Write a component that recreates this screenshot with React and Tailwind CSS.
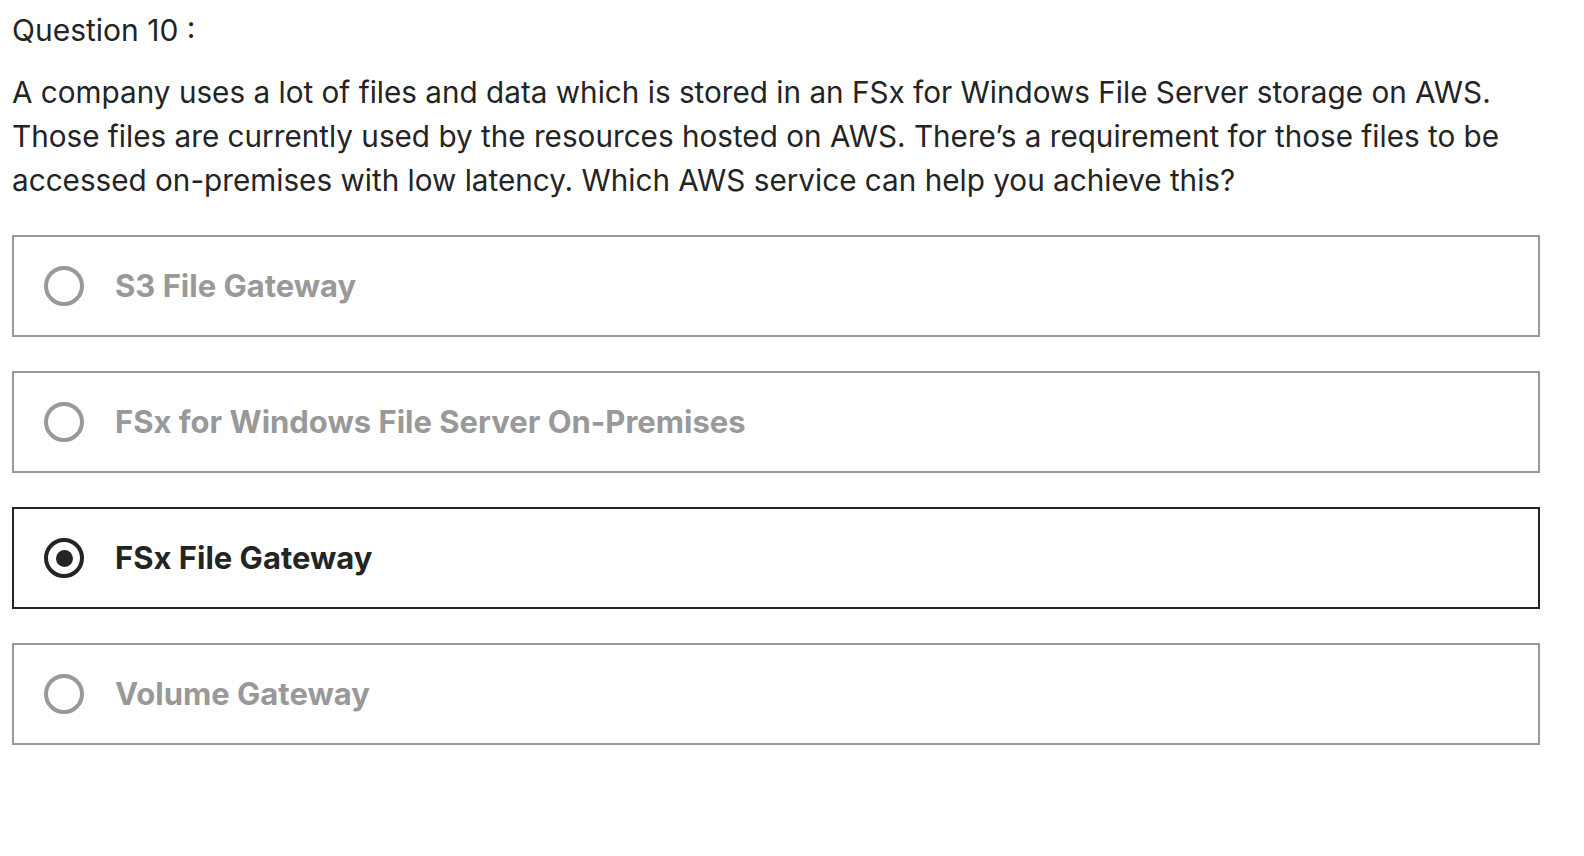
const options = [
  { label: 'S3 File Gateway', selected: false },
  { label: 'FSx for Windows File Server On-Premises', selected: false },
  { label: 'FSx File Gateway', selected: true },
  { label: 'Volume Gateway', selected: false },
]

function Radio({ selected }) {
  if (selected) {
    return (
      <span className="flex items-center justify-center w-[40px] h-[40px] rounded-full border-[4px] border-[#242424] shrink-0">
        <span className="w-[17px] h-[17px] rounded-full bg-[#242424]" />
      </span>
    )
  }
  return <span className="w-[40px] h-[40px] rounded-full border-[4px] border-[#999999] shrink-0" />
}

export default function App() {
  return (
    <div className="min-h-screen bg-white pl-[12px] pt-[10px] text-[#242424] font-['Inter',sans-serif]">
      <p className="text-[30px] leading-[40px]">Question 10 :</p>
      <p className="mt-[20px] w-[1540px] text-[29.7px] leading-[44px]">
        A company uses a lot of files and data which is stored in an FSx for Windows File Server storage on AWS.
        Those files are currently used by the resources hosted on AWS. There’s a requirement for those files to be
        accessed on-premises with low latency. Which AWS service can help you achieve this?
      </p>
      <div className="mt-[33px] flex flex-col gap-[34px] w-[1528px]">
        {options.map((o) => (
          <div
            key={o.label}
            className={`flex items-center h-[102px] border-2 pl-[30px] gap-[31px] ${
              o.selected ? 'border-[#242424]' : 'border-[#999999]'
            }`}
          >
            <Radio selected={o.selected} />
            <span
              className={`text-[31px] font-bold ${o.selected ? 'text-[#242424]' : 'text-[#999999]'}`}
            >
              {o.label}
            </span>
          </div>
        ))}
      </div>
    </div>
  )
}
